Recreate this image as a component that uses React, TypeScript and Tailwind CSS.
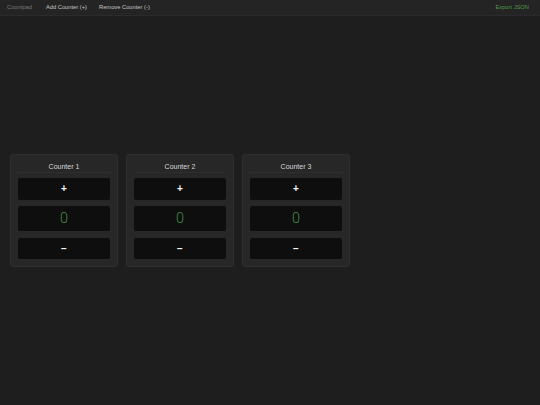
import React from "react";

function Counter({ n }: { n: number }) {
  return (
    <div className="w-[108px] rounded-[3px] border border-[#2f2f2f] bg-[#272727] px-[7px] pb-[7px]">
      <div className="border-b border-[#2d2d2d] pt-[8px] pb-[1px] text-center text-[7px] leading-[8px] text-[#d8d8d8]">
        Counter {n}
      </div>
      <div className="mt-[5px] flex flex-col">
        <div className="flex h-[22px] items-center justify-center rounded-[2px] bg-[#0e0e0e] text-[10px] font-bold leading-none text-[#f4f4f4]">
          +
        </div>
        <div className="mt-[6px] flex h-[25px] items-center justify-center rounded-[2px] bg-[#0e0e0e] pt-[2px] font-['Roboto',sans-serif] text-[14.5px] font-light leading-none text-[#3f8f3f]">
          0
        </div>
        <div className="mt-[7px] flex h-[21px] items-center justify-center rounded-[2px] bg-[#0e0e0e] text-[10px] font-bold leading-none text-[#f4f4f4]">
          −
        </div>
      </div>
    </div>
  );
}

export default function App() {
  return (
    <div className="flex h-[405px] w-[540px] flex-col bg-[#1e1e1e] font-['Liberation_Sans',Arial,sans-serif]">
      <div className="flex h-[16px] items-center border-b border-[#2b2b2b] bg-[#242424] pl-[7px] pr-[11px] text-[5.75px]">
        <span className="text-[#7a7a7a]">Countpad</span>
        <span className="ml-[14px] text-[#c4c4c4]">Add Counter (+)</span>
        <span className="ml-[12px] text-[#c4c4c4]">Remove Counter (-)</span>
        <span className="ml-auto text-[#4c9a4c]">Export JSON</span>
      </div>
      <div className="flex flex-1 items-center px-[10px]">
        <div className="flex gap-[8px]">
          <Counter n={1} />
          <Counter n={2} />
          <Counter n={3} />
        </div>
      </div>
    </div>
  );
}
